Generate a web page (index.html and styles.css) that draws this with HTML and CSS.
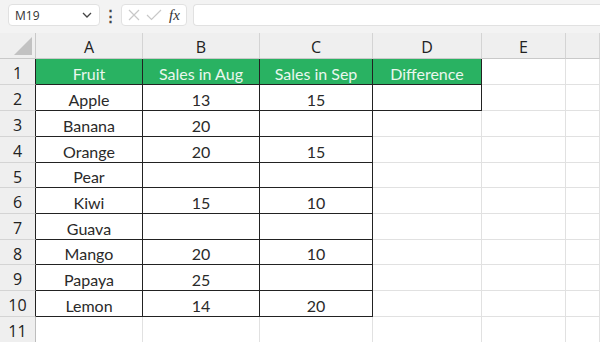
FILE: index.html
```html
<!DOCTYPE html>
<html>

<head>
    <meta charset="UTF-8">
    <title>Sheet</title>
    <link rel="stylesheet" href="styles.css">
</head>

<body>
    <div id="formula-bar">
        <div class="name-box">
            <span>M19</span>
            <svg class="chevron" width="10" height="6" viewBox="0 0 10 6">
                <path d="M1 1 L5 5 L9 1" fill="none" stroke="#444" stroke-width="1.3" />
            </svg>
        </div>
        <div class="dots">&#8942;</div>
        <div class="fx-box">
            <svg width="14" height="14" viewBox="0 0 14 14">
                <path d="M2 2 L12 12 M12 2 L2 12" stroke="#c8c8c8" stroke-width="1.2" />
            </svg>
            <svg width="16" height="14" viewBox="0 0 16 14">
                <path d="M1 7 L5.5 11.5 L15 2" fill="none" stroke="#c8c8c8" stroke-width="1.2" />
            </svg>
            <span class="fx">fx</span>
        </div>
        <div class="formula-input"></div>
    </div>
    <div id="sheet">
        <div class="corner"><div class="triangle"></div></div>
        <div class="col-head">A</div>
        <div class="col-head">B</div>
        <div class="col-head">C</div>
        <div class="col-head">D</div>
        <div class="col-head">E</div>
        <div class="col-head"></div>
    </div>
    <script>
        var rows = [
            ["Fruit", "Sales in Aug", "Sales in Sep", "Difference"],
            ["Apple", "13", "15", ""],
            ["Banana", "20", ""],
            ["Orange", "20", "15"],
            ["Pear", "", ""],
            ["Kiwi", "15", "10"],
            ["Guava", "", ""],
            ["Mango", "20", "10"],
            ["Papaya", "25", ""],
            ["Lemon", "14", "20"],
            null
        ];
        var sheet = document.getElementById("sheet");
        function cell(cls, text) {
            var d = document.createElement("div");
            d.className = cls;
            d.textContent = text || "";
            sheet.appendChild(d);
        }
        rows.forEach(function (row, i) {
            cell(row ? "row-head in-table" : "row-head", String(i + 1));
            for (var c = 0; c < 6; c++) {
                var cls = "cell";
                if (row && c < row.length) cls += " boxed";
                if (i == 0 && c < 4) cls += " green";
                cell(cls, row && row[c]);
            }
        });
    </script>
</body>

</html>
```

FILE: styles.css
```css
body {
    margin: 0;
    width: 600px;
    height: 342px;
    overflow: hidden;
    background: #ffffff;
    font-family: "Lato", sans-serif;
}

#formula-bar {
    height: 33px;
    background: #f3f3f3;
    display: flex;
    align-items: flex-start;
    padding-top: 4px;
    padding-left: 8px;
    box-sizing: border-box;
}

.name-box,
.fx-box,
.formula-input {
    height: 22px;
    background: #fff;
    border: 1px solid #e1e1e1;
    border-radius: 4px;
    box-sizing: border-box;
}

.name-box {
    width: 92px;
    display: flex;
    align-items: center;
    justify-content: space-between;
    padding: 0 7px 0 6px;
    font-family: "Open Sans", sans-serif;
    font-size: 12px;
    color: #333;
}

.dots {
    width: 21px;
    text-align: center;
    font-size: 15px;
    line-height: 22px;
    color: #444;
    font-weight: bold;
}

.fx-box {
    width: 66px;
    display: flex;
    align-items: center;
    gap: 5px;
    padding-left: 5px;
}

.fx {
    font-family: "Liberation Serif", serif;
    font-style: italic;
    font-size: 15px;
    color: #333;
    margin-left: 2px;
}

.formula-input {
    flex: 1;
    margin-left: 6px;
    border-right: none;
    border-radius: 4px 0 0 4px;
}

#sheet {
    display: grid;
    grid-template-columns: 36px 107px 117px 113px 109px 84px 1fr;
    grid-template-rows: 26px 26px 26px 26px 26px 25px 26px 26px 25px 26px 26px 26px;
}

.corner {
    background: #efefef;
    border-right: 1px solid #c9c9c9;
    border-bottom: 1px solid #c9c9c9;
    position: relative;
}

.triangle {
    position: absolute;
    right: 3px;
    bottom: 3px;
    width: 0;
    height: 0;
    border-left: 18px solid transparent;
    border-bottom: 18px solid #c2c2c2;
}

.col-head {
    background: #efefef;
    border-right: 1px solid #d4d4d4;
    border-bottom: 1px solid #c9c9c9;
    display: flex;
    align-items: center;
    justify-content: center;
    padding-top: 2px;
    box-sizing: border-box;
    font-family: "Open Sans", sans-serif;
    font-size: 16px;
    color: #222;
}

.row-head {
    background: #efefef;
    border-right: 1px solid #bdbdbd;
    border-bottom: 1px solid #d4d4d4;
    display: flex;
    align-items: center;
    justify-content: center;
    padding-top: 3px;
    box-sizing: border-box;
    font-family: "Open Sans", sans-serif;
    font-size: 16px;
    color: #222;
}

.row-head.in-table {
    border-right-color: #222;
}

.cell {
    border-right: 1px solid #e1e1e1;
    border-bottom: 1px solid #e1e1e1;
    display: flex;
    align-items: center;
    justify-content: center;
    padding-top: 3px;
    box-sizing: border-box;
    font-size: 16px;
    color: #2a2a2a;
}

.cell.boxed {
    border-right-color: #222;
    border-bottom-color: #222;
}

.cell.green {
    background: #29b262;
    color: #eaf7ee;
}
```
